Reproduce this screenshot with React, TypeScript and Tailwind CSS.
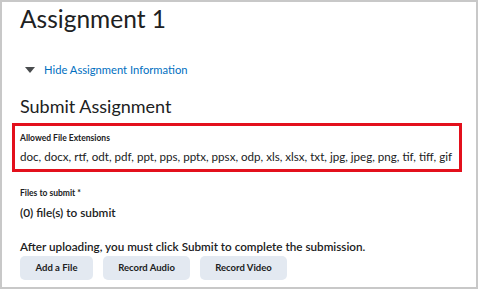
import React from "react";

const buttons = ["Add a File", "Record Audio", "Record Video"];

export default function App() {
  return (
    <div className="w-[480px] h-[291px] bg-white font-['Lato',sans-serif] text-[#202122]">
      <div className="w-[478px] h-[289px] border-2 border-[#c8c8c8] px-[18px] pt-[1px] overflow-hidden">
        <h1 className="text-[24.5px] leading-[32px] font-normal">Assignment 1</h1>

        <div className="mt-[28px] h-[14px] flex items-center gap-[9px] pl-[5px]">
          <svg width="10" height="6" viewBox="0 0 10 6">
            <path d="M0 0h10L5 6z" fill="#494c4e" />
          </svg>
          <span className="text-[11.2px] leading-[14px] text-[#006fbf]">Hide Assignment Information</span>
        </div>

        <h2 className="mt-[18px] text-[18px] leading-[22px] font-normal">Submit Assignment</h2>

        <div className="-ml-[8px] mt-[6px] w-[450px] h-[49px] border-[3px] border-[#e3101c] pl-[5px] pt-[6px]">
          <div className="text-[8.5px] font-bold leading-[12px]">Allowed File Extensions</div>
          <div className="mt-[5px] text-[11.6px] leading-[16px] whitespace-nowrap">
            doc, docx, rtf, odt, pdf, ppt, pps, pptx, ppsx, odp, xls, xlsx, txt, jpg, jpeg, png, tif, tiff, gif
          </div>
        </div>

        <div className="mt-[15px] text-[8.5px] font-bold leading-[12px]">Files to submit *</div>
        <div className="mt-[6px] text-[11.8px] font-semibold leading-[16px]">(0) file(s) to submit</div>

        <div className="mt-[17px] text-[11.7px] font-semibold leading-[16px]">
          After uploading, you must click Submit to complete the submission.
        </div>

        <div className="mt-[2px] flex gap-[10px]">
          {buttons.map((b, i) => (
            <button
              key={b}
              className={
                "h-[24px] rounded-[5px] bg-[#e3e9f1] text-[9.5px] font-bold text-[#202122] " +
                (i === 0 ? "w-[73px]" : "w-[87px]")
              }
            >
              {b}
            </button>
          ))}
        </div>
      </div>
    </div>
  );
}
